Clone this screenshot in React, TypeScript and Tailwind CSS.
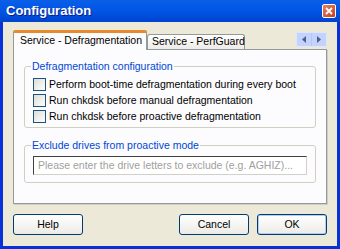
import React from 'react';

const font = { fontFamily: '"Liberation Sans", Arial, sans-serif' };

const CheckRow: React.FC<{ label: string }> = ({ label }) => (
  <label className="flex items-center h-4 gap-[3px] whitespace-nowrap">
    <span className="w-[13px] h-[13px] border border-[#1c5180] bg-gradient-to-br from-[#dcdcd7] to-white shrink-0" />
    <span className="text-[10.5px] text-black leading-none">{label}</span>
  </label>
);

const GroupBox: React.FC<{ title: string; className?: string; children: React.ReactNode }> = ({ title, className, children }) => (
  <fieldset className={`border border-[#d0d0bf] rounded-[3px] px-[8px] ${className || ''}`}>
    <legend className="text-[10.5px] text-[#0046d5] px-[1px] -ml-[2px] leading-[12px] whitespace-nowrap">{title}</legend>
    {children}
  </fieldset>
);

const XpButton: React.FC<{ label: string; className?: string }> = ({ label, className }) => (
  <button className={`h-[21px] rounded-[3px] border border-[#003c74] bg-gradient-to-b from-white to-[#ecebe6] text-[10.5px] text-black ${className || ''}`}>
    {label}
  </button>
);

export default function App() {
  return (
    <div className="w-[340px] h-[249px] bg-[#0831d9] flex flex-col overflow-hidden" style={font}>
      {/* title bar */}
      <div className="h-[22px] shrink-0 flex items-center justify-between pl-[6px] pr-[4px] bg-gradient-to-b from-[#0a5fe8] via-[#0055e5] to-[#0043cf]">
        <span className="text-white font-bold text-[13px]" style={{ textShadow: '1px 1px #0a1e8c' }}>Configuration</span>
        <span className="w-[14px] h-[14px] rounded-[2px] border border-white bg-gradient-to-br from-[#e5805f] to-[#c4401f] flex items-center justify-center">
          <svg width="8" height="8" viewBox="0 0 8 8">
            <path d="M1 1 L7 7 M7 1 L1 7" stroke="white" strokeWidth="1.8" />
          </svg>
        </span>
      </div>
      {/* body */}
      <div className="flex-1 mx-[3px] mb-[3px] bg-[#ece9d8] flex flex-col pl-[10px] pr-[10px] pt-[8px]">
        {/* tabs */}
        <div className="flex items-end h-[19px] shrink-0">
          <div className="relative z-10 h-[20px] w-[134px] bg-[#fcfcfe] border border-b-0 border-[#919b9c] rounded-t-[3px] flex items-center pl-[6px] text-[10.5px] -mb-[1px] whitespace-nowrap">
            <span className="absolute -left-[1px] -right-[1px] -top-[1px] h-[3px] bg-[#e68b2c] rounded-t-[3px]" />
            Service - Defragmentation
          </div>
          <div className="h-[15px] w-[98px] bg-gradient-to-b from-white to-[#ecebe6] border border-b-0 border-[#919b9c] rounded-t-[3px] flex items-center pl-[4px] text-[10.5px] whitespace-nowrap">
            Service - PerfGuard
          </div>
          <div className="ml-auto mb-[2px] h-[15px] w-[31px] rounded-[2px] bg-[#c3d3fd] border border-[#dce6fc] flex">
            <span className="flex-1 flex items-center justify-center border-r border-[#b5c7f5]">
              <svg width="4" height="7" viewBox="0 0 4 7"><path d="M4 0 L0 3.5 L4 7Z" fill="#4d6185" /></svg>
            </span>
            <span className="flex-1 flex items-center justify-center">
              <svg width="4" height="7" viewBox="0 0 4 7"><path d="M0 0 L4 3.5 L0 7Z" fill="#4d6185" /></svg>
            </span>
          </div>
        </div>
        {/* tab page */}
        <div className="h-[155px] shrink-0 bg-[#fcfcfe] border border-[#919b9c] shadow-[1px_1px_0_#d0cec1] px-[10px] pt-[10px]">
          <GroupBox title="Defragmentation configuration" className="h-[68px] pt-[4px]">
            <div className="flex flex-col">
              <CheckRow label="Perform boot-time defragmentation during every boot" />
              <CheckRow label="Run chkdsk before manual defragmentation" />
              <CheckRow label="Run chkdsk before proactive defragmentation" />
            </div>
          </GroupBox>
          <GroupBox title="Exclude drives from proactive mode" className="h-[44px] mt-[11px] pt-[5px]">
            <div className="h-[19px] border border-[#404040] border-r-[#d4d0c8] border-b-[#d4d0c8] bg-white flex items-center px-[4px] text-[10.5px] text-[#a0a0a0] whitespace-nowrap overflow-hidden">
              Please enter the drive letters to exclude (e.g. AGHIZ)...
            </div>
          </GroupBox>
        </div>
        {/* buttons */}
        <div className="flex items-center mt-[10px]">
          <XpButton label="Help" className="w-[70px]" />
          <XpButton label="Cancel" className="w-[70px] ml-auto" />
          <XpButton label="OK" className="w-[70px] ml-[8px] shadow-[inset_0_0_0_1px_#b0ccf7]" />
        </div>
      </div>
    </div>
  );
}
